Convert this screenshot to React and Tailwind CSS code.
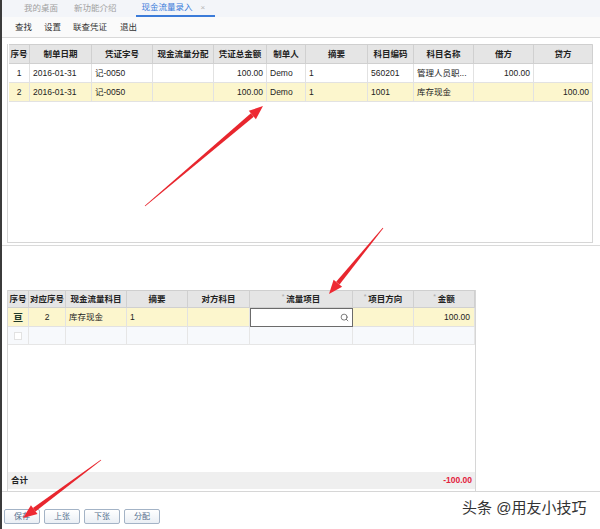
import React from 'react';
import { Search } from 'lucide-react';

const topHeaders = ['序号', '制单日期', '凭证字号', '现金流量分配', '凭证总金额', '制单人', '摘要', '科目编码', '科目名称', '借方', '贷方'];
const topAlign = ['c', 'l', 'l', 'l', 'r', 'l', 'l', 'l', 'l', 'r', 'r'];
const topRows = [
  ['1', '2016-01-31', '记-0050', '', '100.00', 'Demo', '1', '560201', '管理人员职...', '100.00', ''],
  ['2', '2016-01-31', '记-0050', '', '100.00', 'Demo', '1', '1001', '库存现金', '', '100.00'],
];

const alignCls = { c: 'justify-center', l: 'justify-start', r: 'justify-end' };

function Arrow({ x1, y1, x2, y2 }) {
  const dx = x2 - x1;
  const dy = y2 - y1;
  const len = Math.hypot(dx, dy);
  const ux = dx / len;
  const uy = dy / len;
  const nx = -uy;
  const ny = ux;
  const L = 14;
  const W = 5.5;
  const bx = x2 - ux * L;
  const by = y2 - uy * L;
  const shaft = [
    [x1 + nx * 0.4, y1 + ny * 0.4],
    [bx + nx * 2.2, by + ny * 2.2],
    [bx - nx * 2.2, by - ny * 2.2],
    [x1 - nx * 0.4, y1 - ny * 0.4],
  ];
  const head = [
    [x2, y2],
    [bx + nx * W, by + ny * W],
    [bx - nx * W, by - ny * W],
  ];
  const p = (a) => a.map((q) => q.join(',')).join(' ');
  return (
    <g>
      <polygon points={p(shaft)} fill="#e8262e" />
      <polygon points={p(head)} fill="#ee2a33" />
    </g>
  );
}

function Btn({ children }) {
  return (
    <div className="w-[36px] h-[15px] border border-[#a3b3c6] rounded-[2px] bg-gradient-to-b from-white to-[#eaeff5] flex items-center justify-center text-[8px] text-[#56708d]">
      {children}
    </div>
  );
}

export default function App() {
  return (
    <div className="relative w-[600px] h-[529px] overflow-hidden bg-white flex font-['Liberation_Sans','Noto_Sans_CJK_SC',sans-serif] text-[#222]">
      <div className="w-[2px] bg-[#3b3b3b] shrink-0" />
      <div className="flex-1 flex flex-col">
        {/* tab bar */}
        <div className="h-[17px] bg-[#f3f5f9] flex items-end text-[8.5px] text-[#a0a0a0]">
          <div className="ml-[22px] h-full flex items-center">我的桌面</div>
          <div className="ml-[16px] h-full flex items-center">新功能介绍</div>
          <div className="ml-[19px] w-[79px] h-full flex items-center border-b-2 border-[#3b7bd9]">
            <span className="ml-[6px] text-[#3b7bd9]">现金流量录入</span>
            <span className="ml-[8px] text-[#b5b5b5] text-[8px]">×</span>
          </div>
        </div>
        {/* toolbar */}
        <div className="h-[21px] bg-[#fafafa] border-b border-[#d9d9d9] flex items-center text-[8.5px] text-[#333]">
          <span className="ml-[13px]">查找</span>
          <span className="ml-[12px]">设置</span>
          <span className="ml-[12px]">联查凭证</span>
          <span className="ml-[13px]">退出</span>
        </div>
        {/* top grid panel */}
        <div className="mt-[6px] ml-[5px] w-[586px] h-[199px] border-l border-r border-b border-[#d6d6d6]">
          <div className="ml-px grid grid-cols-[21px_62px_61px_61px_53px_39px_62px_46px_60px_60px_59px] border-t border-[#cfcfcf] text-[8.5px]">
            {topHeaders.map((h) => (
              <div key={h} className="h-[19px] bg-[#e5e5e5] border-r border-b border-[#d0d0d0] flex items-center justify-center font-bold text-[#222] whitespace-nowrap">
                {h}
              </div>
            ))}
            {topRows.map((row, r) =>
              row.map((c, i) => (
                <div
                  key={r + '-' + i}
                  className={`h-[19px] border-r border-b border-[#e2e2e2] flex items-center px-[3px] whitespace-nowrap ${alignCls[topAlign[i]]} ${r === 1 ? 'bg-[#fcf6cd]' : 'bg-white'}`}
                >
                  {c}
                </div>
              ))
            )}
          </div>
        </div>
        <div className="mt-[2px] h-px bg-[#dadada]" />
        {/* bottom grid panel */}
        <div className="mt-[44px] ml-[5px] w-[469px] h-[201px] border-l border-r border-[#d6d6d6] flex flex-col">
          <div className="grid grid-cols-[21px_37px_61px_61px_62px_103px_61px_61px] border-t border-[#cfcfcf] text-[8.5px]">
            {['序号', '对应序号', '现金流量科目', '摘要', '对方科目', '流量项目', '项目方向', '金额'].map((h, i) => (
              <div key={h} className="h-[17px] bg-[#e5e5e5] border-r border-b border-[#d0d0d0] flex items-center justify-center font-bold whitespace-nowrap">
                {i >= 5 && <span className="text-[#aaa] font-normal text-[7px] mr-[2px] -mt-[3px]">*</span>}
                {h}
              </div>
            ))}
            {/* row 1 */}
            <div className="h-[19px] bg-[#fcf6cd] border-r border-b border-[#e2e2e2] flex items-center justify-center font-bold text-[10px] text-[#1f3a2a]">亘</div>
            <div className="h-[19px] bg-[#fcf6cd] border-r border-b border-[#e2e2e2] flex items-center justify-center">2</div>
            <div className="h-[19px] bg-[#fcf6cd] border-r border-b border-[#e2e2e2] flex items-center px-[3px]">库存现金</div>
            <div className="h-[19px] bg-[#fcf6cd] border-r border-b border-[#e2e2e2] flex items-center px-[3px]">1</div>
            <div className="h-[19px] bg-[#fcf6cd] border-r border-b border-[#e2e2e2]" />
            <div className="h-[19px] bg-white border border-[#6b6b6b] flex items-center justify-end pr-[3px]">
              <Search size={9} strokeWidth={2} color="#555" />
            </div>
            <div className="h-[19px] bg-[#fcf6cd] border-r border-b border-[#e2e2e2]" />
            <div className="h-[19px] bg-[#fcf6cd] border-r border-b border-[#e2e2e2] flex items-center justify-end px-[4px]">100.00</div>
            {/* row 2 */}
            <div className="h-[18px] bg-[#f7f9fc] border-r border-b border-[#e6e6e6] flex items-center justify-center">
              <div className="w-[8px] h-[8px] border border-[#e2e2e2] bg-white" />
            </div>
            {[0, 1, 2, 3, 4, 5, 6].map((k) => (
              <div key={k} className="h-[18px] bg-[#f7f9fc] border-r border-b border-[#e6e6e6]" />
            ))}
          </div>
          <div className="flex-1" />
          <div className="h-[17px] bg-[#efefef] flex items-center justify-between px-[3px] text-[8.5px] mb-[2px]">
            <span className="font-bold">合计</span>
            <span className="text-[#e3213d] font-bold">-100.00</span>
          </div>
        </div>
        <div className="h-px bg-[#d6d6d6]" />
        {/* buttons */}
        <div className="mt-[17px] ml-[2px] flex gap-[4px]">
          <Btn>保存</Btn>
          <Btn>上张</Btn>
          <Btn>下张</Btn>
          <Btn>分配</Btn>
        </div>
      </div>

      {/* watermark */}
      <div className="absolute left-[462px] top-[497px] text-[15px] text-[#333] [text-shadow:0_0_2px_#fff] whitespace-nowrap">
        头条 @用友小技巧
      </div>

      {/* annotation arrows */}
      <svg className="absolute inset-0 pointer-events-none" width="600" height="529">
        <Arrow x1={145} y1={206} x2={263} y2={106} />
        <Arrow x1={383} y1={228} x2={329} y2={294} />
        <Arrow x1={101} y1={460} x2={23} y2={518} />
      </svg>
    </div>
  );
}
